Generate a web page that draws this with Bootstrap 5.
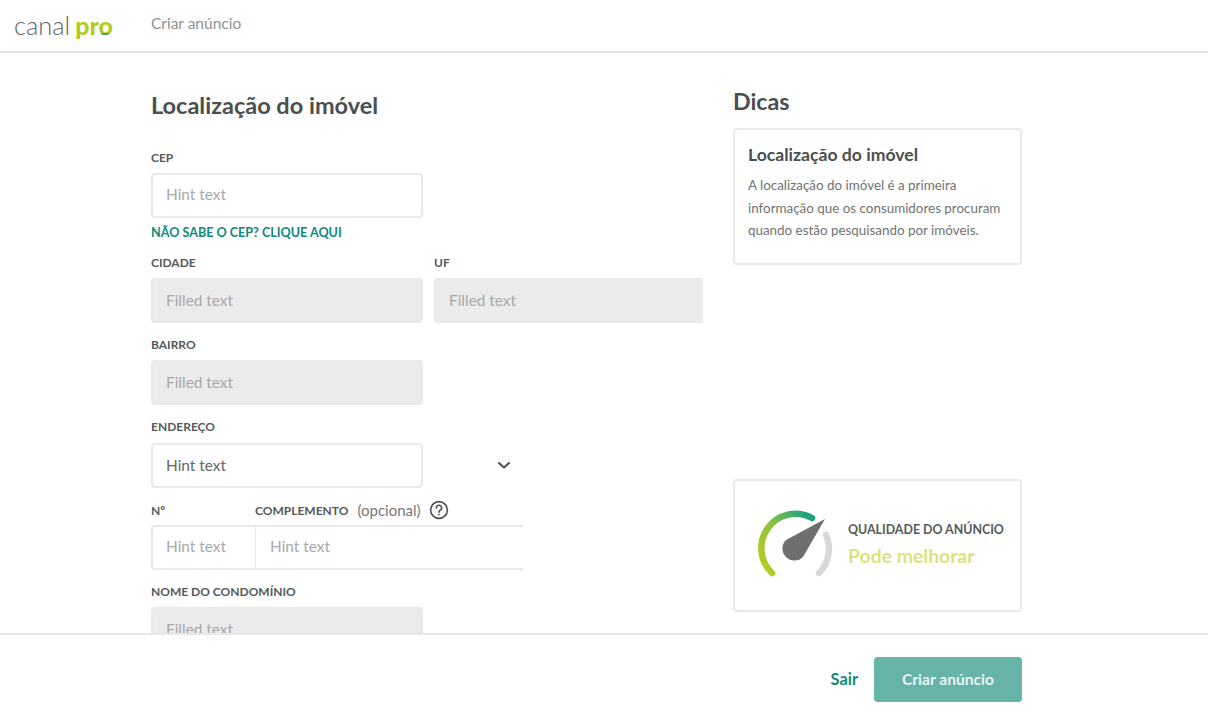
<!DOCTYPE html>
<html lang="pt-BR">
<head>
<meta charset="utf-8">
<title>Criar anúncio</title>
<link rel="stylesheet" href="https://cdn.jsdelivr.net/npm/bootstrap@5.3.0/dist/css/bootstrap.min.css">
<style>
html,body{height:725px;overflow:hidden}
body{font-family:Lato,"Open Sans",sans-serif;color:#4a4f4f;background:#fff;display:flex;flex-direction:column}
.top-bar{height:53px;flex:none;border-bottom:2px solid #e3e4e4;padding:0 0 0 14px;align-items:center;justify-content:flex-start;flex-wrap:nowrap}
.brand-logo{font-size:25.4px;line-height:1;padding:0;margin:0 38px 0 0;width:99px;color:#5f6466;font-weight:300;letter-spacing:0;white-space:nowrap}
.brand-logo b{color:#b3cc1d;font-weight:900;font-size:25px;margin-left:5px;position:relative}
.logo-arc{position:absolute;right:4px;bottom:5px;width:8px;height:2px;border-radius:0 0 4px 4px;background:#3aa568}
.page-title{font-size:15.5px;color:#8e9292;margin-top:-3px}
.work-area{flex:1 1 auto;min-height:0;overflow:hidden;display:flex;padding-left:151px}
.form-col{width:552px;flex:none;overflow:hidden;padding-top:39px}
.form-heading{font-size:23.5px;font-weight:700;line-height:27px;margin:0 0 32px;color:#4a4f4f}
.field-label{display:block;font-size:12px;font-weight:700;line-height:14px;margin:0 0 8px;color:#555a5a;white-space:nowrap}
.field-box{height:45px;border:2px solid #e9e9e9;border-radius:4px;font-size:15.4px;padding:0 13px 3px;color:#666;box-shadow:none}
.field-box::placeholder{color:#a8a8a8;opacity:1}
.field-box:disabled{background:#ebebeb;color:#a8a8a8;opacity:1;padding-bottom:1px}
.field-box.typed-box{padding-bottom:1px}
.w-std{width:272px;flex:none}
.cep-link{display:block;font-size:12.6px;font-weight:700;line-height:16px;margin:7px 0 15px;color:#0d8a7c;text-decoration:none}
.field-block{margin-bottom:15px}
.addr-block{margin-bottom:9px}
.addr-label{margin-bottom:9px}
.pair-row{width:700px;gap:11px}
.end-row{gap:74px}
.opt-note{font-size:15px;font-weight:400;color:#777;margin:-3px 0 0 9px}
.split-wrap{width:372px;overflow:hidden;margin-bottom:15px;padding-top:6px}
.split-labels{align-items:center;height:16px;margin-bottom:6px}
.num-label{width:104px;flex:none;margin:0}
.comp-label{margin:0;display:flex;align-items:center}
.help-mark{width:20px;height:20px;margin:-2px 0 0 8px;flex:none}
.split-group{width:520px;flex-wrap:nowrap}
.split-group .num-box{width:105px;flex:none;border-top-right-radius:0;border-bottom-right-radius:0;border-right-width:1px}
.split-group .comp-box{flex:1;margin-left:0;padding-left:14px;border-top-left-radius:0;border-bottom-left-radius:0;border-left-width:1px}
.tips-col{width:289px;margin-left:30px;flex:none;padding-top:34px;display:flex;flex-direction:column}
.tips-heading{font-size:23.2px;font-weight:700;line-height:28px;margin:0 0 13px;color:#4a4f4f}
.tip-panel{border:2px solid #e9e9e9;border-radius:4px;height:137px;padding:14px 13px}
.tip-title{font-size:17.6px;font-weight:700;line-height:22px;margin:0 0 8px;color:#4a4f4f}
.tip-text{font-size:13.4px;line-height:22.5px;color:#6f7373;margin:0;white-space:nowrap}
.score-panel{border:2px solid #e9e9e9;border-radius:4px;height:133px;margin-top:214px;flex-direction:row;align-items:center;padding-left:20px}
.score-info{margin:-2px 0 0 13px}
.score-title{font-size:12.4px;font-weight:700;color:#555a5a;line-height:16px;white-space:nowrap}
.score-value{font-size:19.4px;font-weight:700;color:#dde27c;line-height:24px;margin-top:6px}
.bottom-bar{height:92px;flex:none;border-top:2px solid #e8e8e8;padding:22px 186px 0 0;gap:16px}
.leave-link{font-size:16.4px;font-weight:700;color:#0d8a7c;text-decoration:none;line-height:20px;margin-top:12px}
.make-btn{width:148px;height:45px;background:#66b3a8;border:0;color:#e9f5f3;font-weight:700;font-size:15.6px;border-radius:4px;padding:0}
.make-btn:hover{background:#66b3a8;color:#e9f5f3}
</style>
</head>
<body>
<nav class="navbar top-bar">
  <a class="navbar-brand brand-logo" href="#">canal<b>pro<span class="logo-arc"></span></b></a>
  <span class="page-title">Criar anúncio</span>
</nav>
<main class="work-area">
  <form class="form-col">
    <h1 class="form-heading">Localização do imóvel</h1>
    <label class="field-label" for="cep">CEP</label>
    <input id="cep" class="form-control field-box w-std" placeholder="Hint text">
    <a class="cep-link" href="#">NÃO SABE O CEP? CLIQUE AQUI</a>
    <div class="d-flex pair-row field-block">
      <div class="w-std">
        <label class="field-label" for="cid">CIDADE</label>
        <input id="cid" class="form-control field-box" value="Filled text" disabled>
      </div>
      <div class="w-std">
        <label class="field-label" for="uf">UF</label>
        <input id="uf" class="form-control field-box" value="Filled text" disabled>
      </div>
    </div>
    <div class="field-block">
      <label class="field-label" for="bai">BAIRRO</label>
      <input id="bai" class="form-control field-box w-std" value="Filled text" disabled>
    </div>
    <div class="addr-block">
      <label class="field-label addr-label" for="end">ENDEREÇO</label>
      <div class="d-flex align-items-center end-row">
        <input id="end" class="form-control field-box typed-box w-std" value="Hint text">
        <svg width="14" height="9" viewBox="0 0 14 9" fill="none" stroke="#4a4f4f" stroke-width="2" stroke-linecap="round" stroke-linejoin="round"><path d="M2 2l5 4.500L12 2"/></svg>
      </div>
    </div>
    <div class="split-wrap">
      <div class="d-flex split-labels">
        <label class="field-label num-label" for="num">Nº</label>
        <label class="field-label comp-label" for="comp">COMPLEMENTO <span class="opt-note">(opcional)</span>
          <svg class="help-mark" viewBox="0 0 20 20" fill="none" stroke="#4a4f4f" stroke-width="1.6"><circle cx="10" cy="10" r="8.400"/><path d="M7.400 7.900a2.600 2.600 0 1 1 3.800 2.300c-.9.500-1.200 1-1.200 2" stroke-linecap="round"/><circle cx="10" cy="14.600" r=".6" fill="#4a4f4f" stroke-width=".8"/></svg>
        </label>
      </div>
      <div class="input-group split-group">
        <input id="num" class="form-control field-box num-box" placeholder="Hint text">
        <input id="comp" class="form-control field-box comp-box" placeholder="Hint text">
      </div>
    </div>
    <label class="field-label" for="cond">NOME DO CONDOMÍNIO</label>
    <input id="cond" class="form-control field-box w-std" value="Filled text" disabled>
  </form>
  <aside class="tips-col">
    <h2 class="tips-heading">Dicas</h2>
    <div class="card tip-panel">
      <h3 class="tip-title">Localização do imóvel</h3>
      <p class="tip-text">A localização do imóvel é a primeira<br>informação que os consumidores procuram<br>quando estão pesquisando por imóveis.</p>
    </div>
    <div class="card score-panel">
      <svg width="80" height="72" viewBox="755 509 80 72" class="flex-none">
        <defs><linearGradient id="arcg" x1="0" y1="1" x2="1" y2="0"><stop offset="0" stop-color="#b9cf1c"/><stop offset=".5" stop-color="#8fc23a"/><stop offset="1" stop-color="#12a08a"/></linearGradient></defs>
        <path d="M772 572A34.300 34.300 0 0 1 812 517" fill="none" stroke="url(#arcg)" stroke-width="6.500" stroke-linecap="round"/>
        <path d="M826 534A34.300 34.300 0 0 1 819 572" fill="none" stroke="#d8d8d8" stroke-width="6.500" stroke-linecap="round"/>
        <path d="M825 518L803 556A12 12 0 1 1 786 539Z" fill="#6f6f6f"/>
      </svg>
      <div class="score-info">
        <div class="score-title">QUALIDADE DO ANÚNCIO</div>
        <div class="score-value">Pode melhorar</div>
      </div>
    </div>
  </aside>
</main>
<footer class="d-flex justify-content-end align-items-start bottom-bar">
  <a class="leave-link" href="#">Sair</a>
  <button type="button" class="btn make-btn">Criar anúncio</button>
</footer>
</body>
</html>
